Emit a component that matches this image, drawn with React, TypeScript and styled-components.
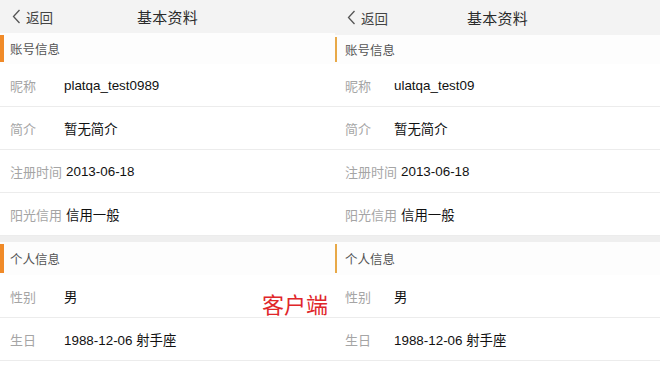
import React from "react";
import styled, { createGlobalStyle } from "styled-components";

const Global = createGlobalStyle`
  html, body { margin: 0; padding: 0; background: #ffffff; }
  body { font-family: "Liberation Sans", "Noto Sans CJK SC", sans-serif; }
  * { box-sizing: border-box; }
`;

const Page = styled.div`
  position: relative;
  display: flex;
  width: 660px;
  height: 370px;
  overflow: hidden;
  background: #ffffff;
`;

const Screen = styled.div<{ $width?: number }>`
  display: flex;
  flex-direction: column;
  flex: ${(p) => (p.$width ? `0 0 ${p.$width}px` : "1 1 auto")};
  min-width: 0;
  background: #ffffff;
`;

const NavBar = styled.div<{ $height: number }>`
  position: relative;
  display: flex;
  align-items: center;
  justify-content: center;
  height: ${(p) => p.$height}px;
  flex: 0 0 auto;
  background: #f3f3f3;
`;

const Back = styled.div`
  position: absolute;
  left: 12px;
  top: 0;
  bottom: 0;
  display: flex;
  align-items: center;
  gap: 5px;
  font-size: 13.5px;
  color: #444;
`;

const Title = styled.div`
  font-size: 15px;
  color: #2a2a2a;
  letter-spacing: 0.3px;
`;

const SectionHead = styled.div<{ $height: number; $bar: string; $barWidth: number }>`
  position: relative;
  display: flex;
  align-items: center;
  height: ${(p) => p.$height}px;
  padding-left: 10px;
  flex: 0 0 auto;
  font-size: 12.5px;
  color: #555;
  background: #fdfdfd;
  &::before {
    content: "";
    position: absolute;
    left: 0;
    top: 2px;
    bottom: 2px;
    width: ${(p) => p.$barWidth}px;
    background: ${(p) => p.$bar};
  }
`;

const Row = styled.div`
  display: flex;
  align-items: center;
  height: 43px;
  flex: 0 0 auto;
  padding-left: 10px;
  gap: 4px;
  border-bottom: 1px solid #ececec;
  font-size: 13px;
`;

const Label = styled.span<{ $min: number }>`
  flex: 0 0 auto;
  min-width: ${(p) => p.$min}px;
  color: #a5a5a5;
`;

const Value = styled.span`
  color: #111111;
  font-size: 13.4px;
`;

const Band = styled.div`
  height: 6px;
  flex: 0 0 auto;
  background: #efefef;
`;

const Stamp = styled.div`
  position: absolute;
  left: 262px;
  top: 292px;
  font-size: 22px;
  color: #e0262a;
  font-family: "Noto Sans CJK SC", sans-serif;
  line-height: 1;
`;

const Chevron = () => (
  <svg width="9" height="15" viewBox="0 0 9 15" fill="none">
    <polyline points="7.5,1 1.5,7.5 7.5,14" stroke="#555" strokeWidth="1.3" />
  </svg>
);

type Variant = {
  nick: string;
  navH: number;
  bar: string;
  barW: number;
  labelMin: number;
};

const ProfileScreen = ({ v, width }: { v: Variant; width?: number }) => (
  <Screen $width={width}>
    <NavBar $height={v.navH}>
      <Back>
        <Chevron />
        <span>返回</span>
      </Back>
      <Title>基本资料</Title>
    </NavBar>
    <SectionHead $height={64 - v.navH} $bar={v.bar} $barWidth={v.barW}>
      账号信息
    </SectionHead>
    <Row>
      <Label $min={v.labelMin}>昵称</Label>
      <Value>{v.nick}</Value>
    </Row>
    <Row>
      <Label $min={v.labelMin}>简介</Label>
      <Value>暂无简介</Value>
    </Row>
    <Row>
      <Label $min={v.labelMin}>注册时间</Label>
      <Value>2013-06-18</Value>
    </Row>
    <Row>
      <Label $min={v.labelMin}>阳光信用</Label>
      <Value>信用一般</Value>
    </Row>
    <Band />
    <SectionHead $height={33} $bar={v.bar} $barWidth={v.barW}>
      个人信息
    </SectionHead>
    <Row>
      <Label $min={v.labelMin}>性别</Label>
      <Value>男</Value>
    </Row>
    <Row>
      <Label $min={v.labelMin}>生日</Label>
      <Value>1988-12-06 射手座</Value>
    </Row>
  </Screen>
);

export default function App() {
  const left: Variant = {
    nick: "platqa_test0989",
    navH: 33,
    bar: "#f08a28",
    barW: 4,
    labelMin: 50,
  };
  const right: Variant = {
    nick: "ulatqa_test09",
    navH: 35,
    bar: "#e8a948",
    barW: 2,
    labelMin: 45,
  };
  return (
    <>
      <Global />
      <Page>
        <ProfileScreen v={left} width={335} />
        <ProfileScreen v={right} />
        <Stamp>客户端</Stamp>
      </Page>
    </>
  );
}
